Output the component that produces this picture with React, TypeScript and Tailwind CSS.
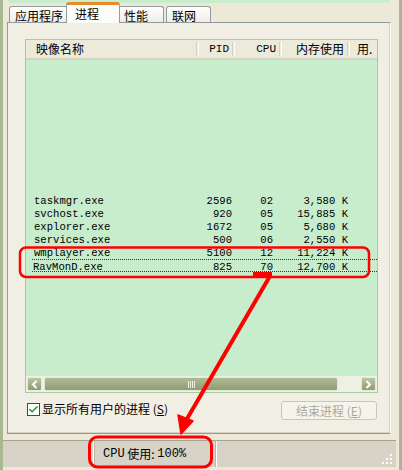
import { Check } from "lucide-react"

const rows = [
  { name: "taskmgr.exe", pid: "2596", cpu: "02", mem: "3,580 K" },
  { name: "svchost.exe", pid: "920", cpu: "05", mem: "15,885 K" },
  { name: "explorer.exe", pid: "1672", cpu: "05", mem: "5,680 K" },
  { name: "services.exe", pid: "500", cpu: "06", mem: "2,550 K" },
  { name: "wmplayer.exe", pid: "5100", cpu: "12", mem: "11,224 K" },
  { name: "RavMonD.exe", pid: "825", cpu: "70", mem: "12,700 K" },
]

const cjk = "font-['SimSun','Noto_Sans_CJK_SC',sans-serif]"
const mono = "font-['Liberation_Mono','DejaVu_Sans_Mono',monospace]"

const Tab = ({ label, active, w }: { label: string; active?: boolean; w: string }) => {
  if (active) {
    return (
      <div
        className={`${w} relative z-10 -mx-[2px] h-[21px] self-end rounded-t-[3px] border-x border-[#919B9C] border-t-[3px] border-t-[#E68B2C] bg-[#FCFCFA] pl-[8px] pt-[1px] text-[12px] leading-[15px] text-black ${cjk}`}
      >
        {label}
      </div>
    )
  }
  return (
    <div
      className={`${w} h-[17px] self-end rounded-t-[3px] border-x border-t border-[#919B9C] bg-gradient-to-b from-white to-[#ECEBE6] pl-[5px] pt-[1px] text-[12px] leading-[15px] text-black ${cjk}`}
    >
      {label}
    </div>
  )
}

const Sep = () => <div className="h-[14px] w-[3px] border-x border-l-[#D6D2C2] border-r-white" />

export default function App() {
  return (
    <div className="relative flex h-[470px] w-[402px] overflow-hidden bg-[#ECE9D8]">
      <div className="w-[3px] bg-[#A8B890]" />
      <div className="flex flex-1 flex-col">
        <div className="ml-[5px] mr-[7px] h-[3px] bg-[#C7EDCC]" />
        <div className="flex h-[20px] pl-[6px]">
          <Tab label="应用程序" w="w-[59px]" />
          <Tab label="进程" active w="w-[54px]" />
          <Tab label="性能" w="w-[46px]" />
          <div className="w-[2px]" />
          <Tab label="联网" w="w-[45px]" />
        </div>
        <div className="-mt-px ml-[4px] mr-[5px] flex h-[412px] flex-col border border-[#919B9C] border-r-[#ffffff] bg-[#F1EFE4] shadow-[inset_-1px_-1px_0_#D5D2C4]">
          <div className="ml-[17px] mr-[12px] mt-[16px] flex h-[354px] flex-col border border-[#A4CBA4] bg-[#C7EDCC]">
            <div className="flex h-[20px] items-center border-b-2 border-b-[#D6D2C2] bg-[#EBEADB] text-[12px] text-black">
              <div className={`w-[170px] pl-[10px] ${cjk}`}>映像名称</div>
              <Sep />
              <div className={`w-[33px] pr-[3px] text-right text-[11px] ${mono}`}>PID</div>
              <Sep />
              <div className={`w-[44px] pr-[3px] text-right text-[11px] ${mono}`}>CPU</div>
              <Sep />
              <div className={`w-[65px] pr-[3px] text-right ${cjk}`}>内存使用</div>
              <Sep />
              <div className={`pl-[7px] ${cjk}`}>用.</div>
            </div>
            <div className="h-[134px]" />
            {rows.map((r, i) => (
              <div
                key={r.name}
                className={`flex h-[13px] items-start pt-[2px] text-[10.6px] leading-[11px] text-black ${mono} ${
                  i === rows.length - 1 ? "ml-[6px] border-y border-dotted border-[#333] pl-[1px] pt-[1px]" : "pl-[8px]"
                }`}
              >
                <div className={i === rows.length - 1 ? "w-[165px]" : "w-[164px]"}>{r.name}</div>
                <div className="w-[34px] text-right">{r.pid}</div>
                <div className="w-[41px] text-right">{r.cpu}</div>
                <div className="w-[75px] text-right">{r.mem}</div>
              </div>
            ))}
            <div className="flex-1" />
            <div className="flex h-[16px] items-stretch bg-[#EEF0E6] px-[1px] py-px">
              <div className="flex w-[15px] items-center justify-center rounded-[2px] border border-[#E6EBD8] bg-gradient-to-b from-[#B9C6A0] to-[#8E9C74]">
                <svg width="7" height="9" viewBox="0 0 7 9">
                  <path d="M5.5 1 L2 4.5 L5.5 8" stroke="white" strokeWidth="2" fill="none" />
                </svg>
              </div>
              <div className="ml-[2px] flex w-[294px] items-center justify-center rounded-[2px] border border-[#E6EBD8] bg-gradient-to-b from-[#AEBB95] to-[#8F9C75]">
                <div className="flex gap-[1px]">
                  {[0, 1, 2, 3].map((k) => (
                    <div key={k} className="h-[7px] w-px bg-[#EEF2E4]" />
                  ))}
                </div>
              </div>
              <div className="flex-1" />
              <div className="flex w-[15px] items-center justify-center rounded-[2px] border border-[#E6EBD8] bg-gradient-to-b from-[#B9C6A0] to-[#8E9C74]">
                <svg width="7" height="9" viewBox="0 0 7 9">
                  <path d="M1.5 1 L5 4.5 L1.5 8" stroke="white" strokeWidth="2" fill="none" />
                </svg>
              </div>
            </div>
          </div>
          <div className="ml-[19px] mr-[13px] mt-[8px] flex items-start justify-between">
            <div className="flex items-center gap-[2px] pt-px">
              <div className="flex h-[13px] w-[13px] items-center justify-center border border-[#1C5180] bg-white">
                <Check className="h-[11px] w-[11px] text-[#21A121]" strokeWidth={3.5} />
              </div>
              <span className={`text-[12px] leading-[14px] text-black ${cjk}`}>显示所有用户的进程 (<span className="underline">S</span>)</span>
            </div>
            <div className={`flex h-[19px] w-[96px] items-center justify-center rounded-[3px] border border-[#C9C7BA] bg-[#F5F4EA] text-[12px] text-[#ACA899] ${cjk}`}>
              结束进程 (<span className="underline">E</span>)
            </div>
          </div>
        </div>
        <div className="mt-[6px] h-px bg-[#A8A493]" />
        <div className="flex h-[26px] bg-[#D7D3C6] text-[12px] text-black">
          <div className="w-[91px] border-r border-r-white" />
          <div className={`flex w-[122px] items-center border-x border-x-[#B8B4A6] pl-[8px] ${cjk}`}>
            <span className={mono}>CPU</span>&nbsp;使用:&nbsp;<span className={mono}>100%</span>
          </div>
          <div className="w-[164px] border-l border-l-white" />
          <div className="flex flex-1 items-end justify-end pb-[2px] pr-[3px]">
            <svg width="11" height="11" viewBox="0 0 11 11">
              {[
                [8, 0],
                [4, 4],
                [8, 4],
                [0, 8],
                [4, 8],
                [8, 8],
              ].map(([x, y]) => (
                <rect key={`${x}-${y}`} x={x} y={y} width="2" height="2" fill="#FFFFFF" />
              ))}
            </svg>
          </div>
        </div>
        <div className="flex-1" />
      </div>
      <div className="flex w-[6px]">
        <div className="w-[3px]" />
        <div className="w-[3px] bg-[#AEB39A]" />
      </div>

      <svg className="pointer-events-none absolute inset-0" width="402" height="470" viewBox="0 0 402 470">
        <rect x="20" y="247.5" width="349" height="29.5" rx="6" fill="none" stroke="#FF0000" strokeWidth="2.5" />
        <rect x="89.5" y="437" width="122" height="30" rx="8" fill="none" stroke="#FF0000" strokeWidth="3" />
        <rect x="253" y="272" width="19" height="5" fill="#FF0000" />
        <path d="M270 276 L184 424" stroke="#FF0000" strokeWidth="4" fill="none" />
        <path d="M181 434 L178 415 L193 421 Z" fill="#FF0000" stroke="#FF0000" strokeWidth="1.5" strokeLinejoin="round" />
      </svg>
    </div>
  )
}
